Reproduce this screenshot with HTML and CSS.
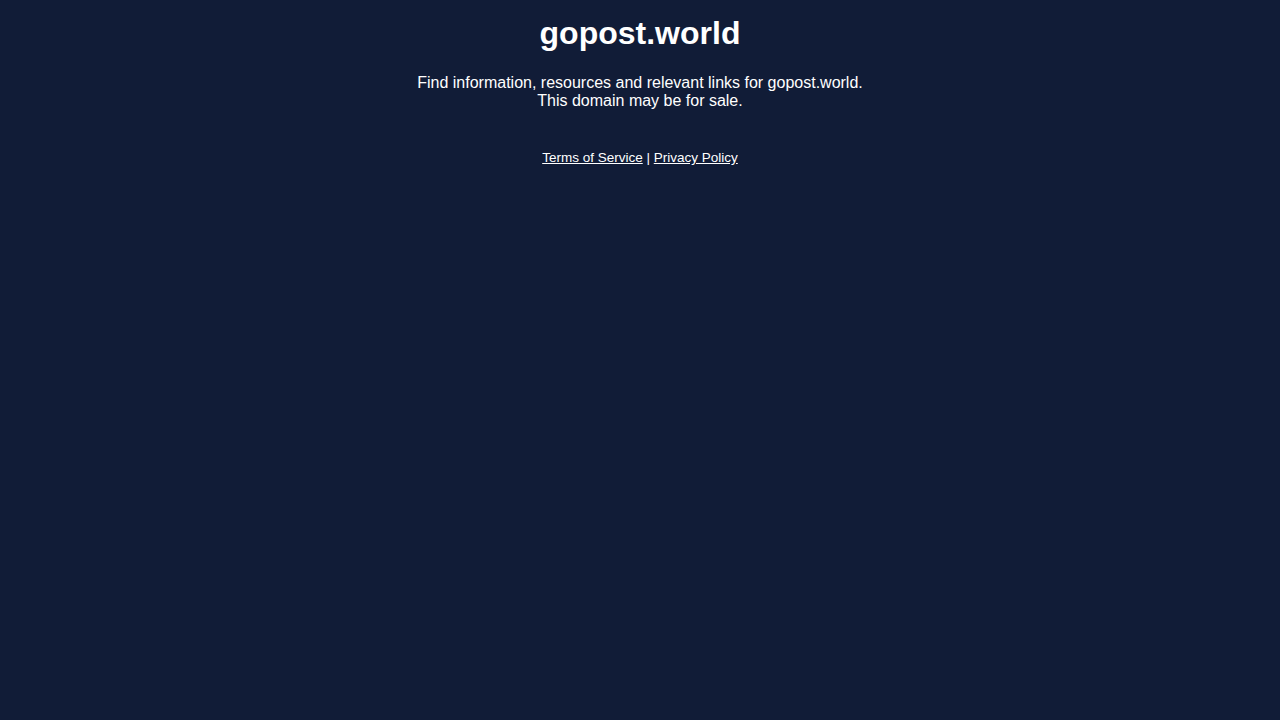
FILE: index.html
```html
<!DOCTYPE html>
<html lang="en">
<head>
<meta charset="utf-8">
<title>gopost.world</title>
<link rel="stylesheet" href="styles.css">
</head>
<body>
<main class="page">
  <h1 class="title">gopost.world</h1>
  <p class="lead">Find information, resources and relevant links for gopost.world.<br>This domain may be for sale.</p>
  <p class="footer"><a href="#">Terms of Service</a> | <a href="#">Privacy Policy</a></p>
</main>
</body>
</html>
```
FILE: styles.css
```css
html, body {
  margin: 0;
  padding: 0;
  background: #111c37;
  height: 100%;
}
body {
  font-family: "Liberation Sans", Arial, sans-serif;
  color: #ffffff;
}
.page {
  display: flex;
  flex-direction: column;
  align-items: center;
  text-align: center;
  padding-top: 15px;
}
.title {
  font-size: 32px;
  font-weight: bold;
  line-height: 37px;
  margin: 0;
}
.lead {
  font-size: 16px;
  line-height: 18px;
  margin: 22px 0 0;
}
.footer {
  font-size: 13.5px;
  line-height: 16px;
  margin: 40px 0 0;
}
.footer a {
  color: #ffffff;
  text-decoration: underline;
}
```
